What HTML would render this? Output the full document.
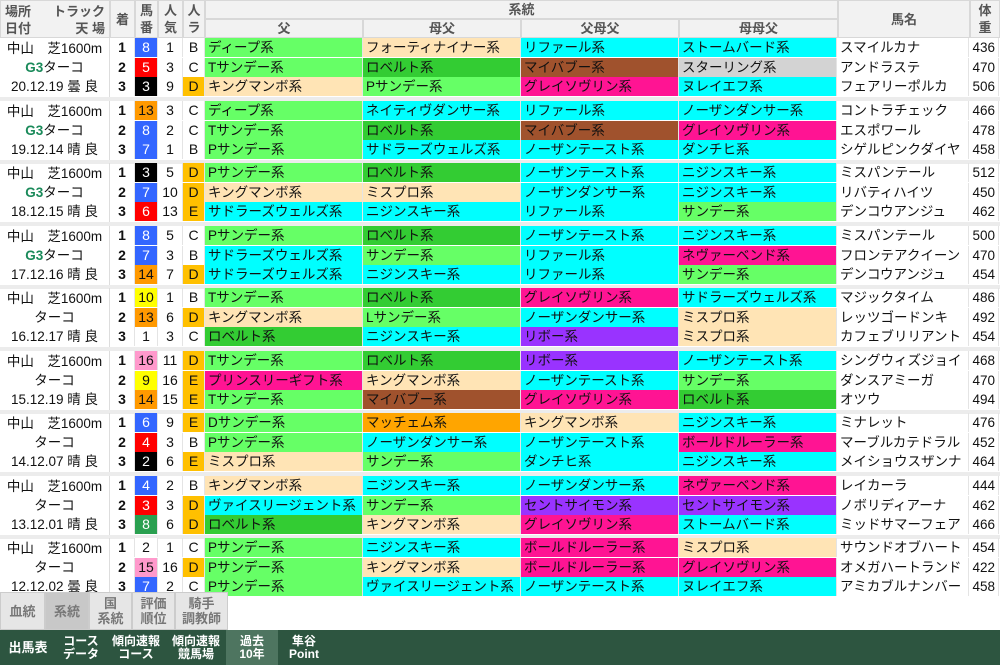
<!DOCTYPE html>
<html><head><meta charset="utf-8"><style>
*{margin:0;padding:0;box-sizing:border-box}
body{width:1000px;height:665px;overflow:hidden;background:#fff;font-family:"Liberation Sans","Noto Sans CJK JP",sans-serif;font-size:13px;color:#111;position:relative}
.a{position:absolute}
.h{background:#f2f2f2;border:1px solid #d8d8d8;color:#555;font-weight:bold;display:flex;align-items:center;justify-content:center;text-align:center;line-height:17px;font-size:13px}
.g{position:absolute;left:0;width:1000px;height:59px}
.loc{position:absolute;left:0;top:0;width:110px;height:59px;border-right:1px solid #ddd;text-align:center;font-size:13.5px;line-height:19px;padding-top:1px}
.loc .g3{color:#1a8a5a;font-weight:bold}
.r{position:absolute;left:110px;width:890px;height:19px;display:flex}
.r div{height:19px;line-height:19px;border-right:1px solid #e4e4e4;white-space:nowrap;overflow:hidden}
.c1{width:25px;text-align:center;font-weight:bold;font-size:14px}
.c2{width:23px;text-align:center;font-size:14px}
.c3{width:25px;text-align:center;font-size:14px}
.c4{width:22px;text-align:center;font-size:14px}
.s{width:158px;padding-left:3px;font-size:13.5px}
.nm{width:132px;padding-left:3px;font-size:13.5px}
.wt{width:30px;text-align:right;padding-right:3px;font-size:13.5px}
.G{background:#66ff66}.DG{background:#33cc33}.P{background:#ffe4b5}.C{background:#00ffff}.BR{background:#a0522d}.PK{background:#ff1493}.GR{background:#d3d3d3}.PU{background:#9933ff}.OR{background:#ffa500}
.Y{background:#ffc000}
.b1{background:#fff}.b2{background:#000;color:#fff}.b3{background:#f00;color:#fff}.b4{background:#3366ff;color:#fff}.b5{background:#ffff00}.b6{background:#2aa050;color:#fff}.b7{background:#ff9900}.b8{background:#ff99cc}
.gap{position:absolute;left:0;width:1000px;height:4px;background:#ececec}
.tab{position:absolute;top:592px;height:38px;background:#e6e6e6;border:1px solid #ccc;color:#777;font-weight:bold;font-size:13px;display:flex;align-items:center;justify-content:center;text-align:center;line-height:15px}
.ft{position:absolute;top:630px;left:0;width:1000px;height:35px;background:#2d5540}
.fi{position:absolute;top:630px;height:35px;color:#fff;font-weight:bold;font-size:12px;display:flex;align-items:center;justify-content:center;text-align:center;line-height:13px}
</style></head><body>
<div class="h a" style="left:0;top:0;width:110px;height:38px;display:block;padding:2px 4px;text-align:left;line-height:17px">場所<span style="float:right">トラック</span><br>日付<span style="float:right">天 場</span></div>
<div class="h a" style="left:110px;top:0;width:25px;height:38px">着</div>
<div class="h a" style="left:135px;top:0;width:23px;height:38px">馬<br>番</div>
<div class="h a" style="left:158px;top:0;width:25px;height:38px">人<br>気</div>
<div class="h a" style="left:183px;top:0;width:22px;height:38px">人<br>ラ</div>
<div class="h a" style="left:205px;top:0;width:633px;height:19px">系統</div>
<div class="h a" style="left:205px;top:19px;width:158px;height:19px">父</div>
<div class="h a" style="left:363px;top:19px;width:158px;height:19px">母父</div>
<div class="h a" style="left:521px;top:19px;width:158px;height:19px">父母父</div>
<div class="h a" style="left:679px;top:19px;width:159px;height:19px">母母父</div>
<div class="h a" style="left:838px;top:0;width:132px;height:38px">馬名</div>
<div class="h a" style="left:970px;top:0;width:30px;height:38px">体<br>重</div>

<div class="g" style="top:38px"><div class="loc">中山　芝1600m<br><span class="g3">G3</span>ターコ<br>20.12.19 曇 良</div>
<div class="r" style="top:0"><div class="c1">1</div><div class="c2 b4">8</div><div class="c3">1</div><div class="c4">B</div><div class="s G">ディープ系</div><div class="s P">フォーティナイナー系</div><div class="s C">リファール系</div><div class="s C">ストームバード系</div><div class="nm">スマイルカナ</div><div class="wt">436</div></div>
<div class="r" style="top:20px"><div class="c1">2</div><div class="c2 b3">5</div><div class="c3">3</div><div class="c4">C</div><div class="s G">Tサンデー系</div><div class="s DG">ロベルト系</div><div class="s BR">マイバブー系</div><div class="s GR">スターリング系</div><div class="nm">アンドラステ</div><div class="wt">470</div></div>
<div class="r" style="top:39px"><div class="c1">3</div><div class="c2 b2">3</div><div class="c3">9</div><div class="c4 Y">D</div><div class="s P">キングマンボ系</div><div class="s G">Pサンデー系</div><div class="s PK">グレイソヴリン系</div><div class="s C">ヌレイエフ系</div><div class="nm">フェアリーポルカ</div><div class="wt">506</div></div></div>
<div class="gap" style="top:97px"></div>

<div class="g" style="top:100.5px"><div class="loc">中山　芝1600m<br><span class="g3">G3</span>ターコ<br>19.12.14 晴 良</div>
<div class="r" style="top:0"><div class="c1">1</div><div class="c2 b7">13</div><div class="c3">3</div><div class="c4">C</div><div class="s G">ディープ系</div><div class="s C">ネイティヴダンサー系</div><div class="s C">リファール系</div><div class="s C">ノーザンダンサー系</div><div class="nm">コントラチェック</div><div class="wt">466</div></div>
<div class="r" style="top:20px"><div class="c1">2</div><div class="c2 b4">8</div><div class="c3">2</div><div class="c4">C</div><div class="s G">Tサンデー系</div><div class="s DG">ロベルト系</div><div class="s BR">マイバブー系</div><div class="s PK">グレイソヴリン系</div><div class="nm">エスポワール</div><div class="wt">478</div></div>
<div class="r" style="top:39px"><div class="c1">3</div><div class="c2 b4">7</div><div class="c3">1</div><div class="c4">B</div><div class="s G">Pサンデー系</div><div class="s C">サドラーズウェルズ系</div><div class="s C">ノーザンテースト系</div><div class="s C">ダンチヒ系</div><div class="nm">シゲルピンクダイヤ</div><div class="wt">458</div></div></div>
<div class="gap" style="top:159.5px"></div>

<div class="g" style="top:163px"><div class="loc">中山　芝1600m<br><span class="g3">G3</span>ターコ<br>18.12.15 晴 良</div>
<div class="r" style="top:0"><div class="c1">1</div><div class="c2 b2">3</div><div class="c3">5</div><div class="c4 Y">D</div><div class="s G">Pサンデー系</div><div class="s DG">ロベルト系</div><div class="s C">ノーザンテースト系</div><div class="s C">ニジンスキー系</div><div class="nm">ミスパンテール</div><div class="wt">512</div></div>
<div class="r" style="top:20px"><div class="c1">2</div><div class="c2 b4">7</div><div class="c3">10</div><div class="c4 Y">D</div><div class="s P">キングマンボ系</div><div class="s P">ミスプロ系</div><div class="s C">ノーザンダンサー系</div><div class="s C">ニジンスキー系</div><div class="nm">リバティハイツ</div><div class="wt">450</div></div>
<div class="r" style="top:39px"><div class="c1">3</div><div class="c2 b3">6</div><div class="c3">13</div><div class="c4 Y">E</div><div class="s C">サドラーズウェルズ系</div><div class="s C">ニジンスキー系</div><div class="s C">リファール系</div><div class="s G">サンデー系</div><div class="nm">デンコウアンジュ</div><div class="wt">462</div></div></div>
<div class="gap" style="top:222px"></div>

<div class="g" style="top:225.5px"><div class="loc">中山　芝1600m<br><span class="g3">G3</span>ターコ<br>17.12.16 晴 良</div>
<div class="r" style="top:0"><div class="c1">1</div><div class="c2 b4">8</div><div class="c3">5</div><div class="c4">C</div><div class="s G">Pサンデー系</div><div class="s DG">ロベルト系</div><div class="s C">ノーザンテースト系</div><div class="s C">ニジンスキー系</div><div class="nm">ミスパンテール</div><div class="wt">500</div></div>
<div class="r" style="top:20px"><div class="c1">2</div><div class="c2 b4">7</div><div class="c3">3</div><div class="c4">B</div><div class="s C">サドラーズウェルズ系</div><div class="s G">サンデー系</div><div class="s C">リファール系</div><div class="s PK">ネヴァーベンド系</div><div class="nm">フロンテアクイーン</div><div class="wt">470</div></div>
<div class="r" style="top:39px"><div class="c1">3</div><div class="c2 b7">14</div><div class="c3">7</div><div class="c4 Y">D</div><div class="s C">サドラーズウェルズ系</div><div class="s C">ニジンスキー系</div><div class="s C">リファール系</div><div class="s G">サンデー系</div><div class="nm">デンコウアンジュ</div><div class="wt">454</div></div></div>
<div class="gap" style="top:284.5px"></div>

<div class="g" style="top:288px"><div class="loc">中山　芝1600m<br>ターコ<br>16.12.17 晴 良</div>
<div class="r" style="top:0"><div class="c1">1</div><div class="c2 b5">10</div><div class="c3">1</div><div class="c4">B</div><div class="s G">Tサンデー系</div><div class="s DG">ロベルト系</div><div class="s PK">グレイソヴリン系</div><div class="s C">サドラーズウェルズ系</div><div class="nm">マジックタイム</div><div class="wt">486</div></div>
<div class="r" style="top:20px"><div class="c1">2</div><div class="c2 b7">13</div><div class="c3">6</div><div class="c4 Y">D</div><div class="s P">キングマンボ系</div><div class="s G">Lサンデー系</div><div class="s C">ノーザンダンサー系</div><div class="s P">ミスプロ系</div><div class="nm">レッツゴードンキ</div><div class="wt">492</div></div>
<div class="r" style="top:39px"><div class="c1">3</div><div class="c2 b1">1</div><div class="c3">3</div><div class="c4">C</div><div class="s DG">ロベルト系</div><div class="s C">ニジンスキー系</div><div class="s PU">リボー系</div><div class="s P">ミスプロ系</div><div class="nm">カフェブリリアント</div><div class="wt">454</div></div></div>
<div class="gap" style="top:347px"></div>

<div class="g" style="top:350.5px"><div class="loc">中山　芝1600m<br>ターコ<br>15.12.19 晴 良</div>
<div class="r" style="top:0"><div class="c1">1</div><div class="c2 b8">16</div><div class="c3">11</div><div class="c4 Y">D</div><div class="s G">Tサンデー系</div><div class="s DG">ロベルト系</div><div class="s PU">リボー系</div><div class="s C">ノーザンテースト系</div><div class="nm">シングウィズジョイ</div><div class="wt">468</div></div>
<div class="r" style="top:20px"><div class="c1">2</div><div class="c2 b5">9</div><div class="c3">16</div><div class="c4 Y">E</div><div class="s PK">プリンスリーギフト系</div><div class="s P">キングマンボ系</div><div class="s C">ノーザンテースト系</div><div class="s G">サンデー系</div><div class="nm">ダンスアミーガ</div><div class="wt">470</div></div>
<div class="r" style="top:39px"><div class="c1">3</div><div class="c2 b7">14</div><div class="c3">15</div><div class="c4 Y">E</div><div class="s G">Tサンデー系</div><div class="s BR">マイバブー系</div><div class="s PK">グレイソヴリン系</div><div class="s DG">ロベルト系</div><div class="nm">オツウ</div><div class="wt">494</div></div></div>
<div class="gap" style="top:409.5px"></div>

<div class="g" style="top:413px"><div class="loc">中山　芝1600m<br>ターコ<br>14.12.07 晴 良</div>
<div class="r" style="top:0"><div class="c1">1</div><div class="c2 b4">6</div><div class="c3">9</div><div class="c4 Y">E</div><div class="s G">Dサンデー系</div><div class="s OR">マッチェム系</div><div class="s P">キングマンボ系</div><div class="s C">ニジンスキー系</div><div class="nm">ミナレット</div><div class="wt">476</div></div>
<div class="r" style="top:20px"><div class="c1">2</div><div class="c2 b3">4</div><div class="c3">3</div><div class="c4">B</div><div class="s G">Pサンデー系</div><div class="s C">ノーザンダンサー系</div><div class="s C">ノーザンテースト系</div><div class="s PK">ボールドルーラー系</div><div class="nm">マーブルカテドラル</div><div class="wt">452</div></div>
<div class="r" style="top:39px"><div class="c1">3</div><div class="c2 b2">2</div><div class="c3">6</div><div class="c4 Y">E</div><div class="s P">ミスプロ系</div><div class="s G">サンデー系</div><div class="s C">ダンチヒ系</div><div class="s C">ニジンスキー系</div><div class="nm">メイショウスザンナ</div><div class="wt">464</div></div></div>
<div class="gap" style="top:472px"></div>

<div class="g" style="top:475.5px"><div class="loc">中山　芝1600m<br>ターコ<br>13.12.01 晴 良</div>
<div class="r" style="top:0"><div class="c1">1</div><div class="c2 b4">4</div><div class="c3">2</div><div class="c4">B</div><div class="s P">キングマンボ系</div><div class="s C">ニジンスキー系</div><div class="s C">ノーザンダンサー系</div><div class="s PK">ネヴァーベンド系</div><div class="nm">レイカーラ</div><div class="wt">444</div></div>
<div class="r" style="top:20px"><div class="c1">2</div><div class="c2 b3">3</div><div class="c3">3</div><div class="c4 Y">D</div><div class="s C">ヴァイスリージェント系</div><div class="s G">サンデー系</div><div class="s PU">セントサイモン系</div><div class="s PU">セントサイモン系</div><div class="nm">ノボリディアーナ</div><div class="wt">462</div></div>
<div class="r" style="top:39px"><div class="c1">3</div><div class="c2 b6">8</div><div class="c3">6</div><div class="c4 Y">D</div><div class="s DG">ロベルト系</div><div class="s P">キングマンボ系</div><div class="s PK">グレイソヴリン系</div><div class="s C">ストームバード系</div><div class="nm">ミッドサマーフェア</div><div class="wt">466</div></div></div>
<div class="gap" style="top:534.5px"></div>

<div class="g" style="top:538px"><div class="loc">中山　芝1600m<br>ターコ<br>12.12.02 曇 良</div>
<div class="r" style="top:0"><div class="c1">1</div><div class="c2 b1">2</div><div class="c3">1</div><div class="c4">C</div><div class="s G">Pサンデー系</div><div class="s C">ニジンスキー系</div><div class="s PK">ボールドルーラー系</div><div class="s P">ミスプロ系</div><div class="nm">サウンドオブハート</div><div class="wt">454</div></div>
<div class="r" style="top:20px"><div class="c1">2</div><div class="c2 b8">15</div><div class="c3">16</div><div class="c4 Y">D</div><div class="s G">Pサンデー系</div><div class="s P">キングマンボ系</div><div class="s PK">ボールドルーラー系</div><div class="s PK">グレイソヴリン系</div><div class="nm">オメガハートランド</div><div class="wt">422</div></div>
<div class="r" style="top:39px"><div class="c1">3</div><div class="c2 b4">7</div><div class="c3">2</div><div class="c4">C</div><div class="s G">Pサンデー系</div><div class="s C">ヴァイスリージェント系</div><div class="s C">ノーザンテースト系</div><div class="s C">ヌレイエフ系</div><div class="nm">アミカブルナンバー</div><div class="wt">458</div></div></div>

<div class="tab" style="left:0;width:45px">血統</div>
<div class="tab" style="left:45px;width:44px;background:#c8c8c8">系統</div>
<div class="tab" style="left:89px;width:43px">国<br>系統</div>
<div class="tab" style="left:132px;width:43px">評価<br>順位</div>
<div class="tab" style="left:175px;width:53px">騎手<br>調教師</div>

<div class="ft"></div>
<div class="fi" style="left:0;width:56px;font-size:13px">出馬表</div>
<div class="fi" style="left:56px;width:50px">コース<br>データ</div>
<div class="fi" style="left:106px;width:60px">傾向速報<br>コース</div>
<div class="fi" style="left:166px;width:60px">傾向速報<br>競馬場</div>
<div class="fi" style="left:226px;width:52px;background:#4e7560">過去<br>10年</div>
<div class="fi" style="left:278px;width:52px">隼谷<br>Point</div>
</body></html>
